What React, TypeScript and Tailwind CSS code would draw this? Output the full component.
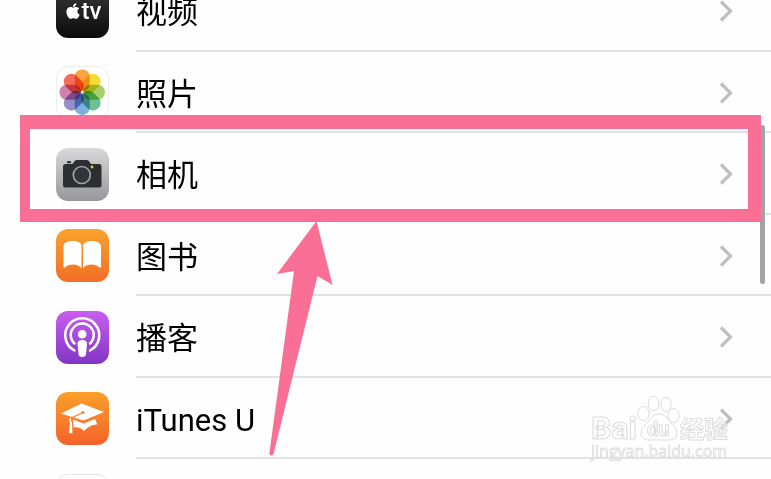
import type { ReactNode } from "react"
import { FaApple } from "react-icons/fa"

const petals = ["#f79a2e", "#f5d721", "#9ccb57", "#5db98a", "#6da7dd", "#8b83c3", "#c873a4", "#f25c4a"]

function TvIcon() {
  return (
    <div className="flex size-[53px] items-center justify-center rounded-xl bg-linear-to-b from-[#3a3a3a] to-[#0c0c0c] text-white">
      <FaApple className="size-[18px]" aria-hidden="true" />
      <span className="text-2xl leading-6 font-medium">tv</span>
    </div>
  )
}

function PhotosIcon() {
  return (
    <svg viewBox="0 0 53 53" className="size-[53px]" aria-hidden="true">
      <rect x="0.5" y="0.5" width="52" height="52" rx="12" fill="#fff" stroke="#ededed" />
      <g className="isolate">
        {petals.map((color, i) => (
          <rect
            key={color}
            x="18.7"
            y="3.5"
            width="15"
            height="21.5"
            rx="7"
            fill={color}
            opacity="0.9"
            transform={`rotate(${i * 45} 26.2 26.2)`}
            className="mix-blend-multiply"
          />
        ))}
      </g>
    </svg>
  )
}

function CameraIcon() {
  return (
    <svg viewBox="0 0 53 53" className="size-[53px]" aria-hidden="true">
      <defs>
        <linearGradient id="camera-bg" x1="0" y1="0" x2="0" y2="1">
          <stop offset="0" stopColor="#d9d9dc" />
          <stop offset="1" stopColor="#97979b" />
        </linearGradient>
      </defs>
      <rect width="53" height="53" rx="12" fill="url(#camera-bg)" />
      <rect x="11" y="13" width="4" height="2.3" rx="0.8" fill="#2d2e31" />
      <path
        d="M9 16H15.5C18 16 18 12 20.5 12H31C33.5 12 33.5 16 36 16H43Q45.5 16 45.5 18.5V37Q45.5 39.5 43 39.5H9.5Q7 39.5 7 37V18.5Q7 16 9 16Z"
        fill="#2d2e31"
      />
      <circle cx="25.8" cy="27" r="8.5" fill="#333437" stroke="#a4a5a8" strokeWidth="1.6" />
      <circle cx="36" cy="19" r="1.4" fill="#d9d431" />
    </svg>
  )
}

function BooksIcon() {
  return (
    <svg viewBox="0 0 53 53" className="size-[53px]" aria-hidden="true">
      <defs>
        <linearGradient id="books-bg" x1="0" y1="0" x2="0" y2="1">
          <stop offset="0" stopColor="#f9a22f" />
          <stop offset="1" stopColor="#f26e26" />
        </linearGradient>
      </defs>
      <rect width="53" height="53" rx="12" fill="url(#books-bg)" />
      <path
        d="M7.5 17C7.5 10.5 25.5 10 25.5 17V39.5C23 34.5 12.5 34.5 9 38.5Q7.5 39.5 7.5 37.5ZM45 17C45 10.5 27 10 27 17V39.5C29.5 34.5 40 34.5 43.5 38.5Q45 39.5 45 37.5Z"
        fill="#fff"
      />
    </svg>
  )
}

function PodcastsIcon() {
  return (
    <svg viewBox="0 0 53 53" className="size-[53px]" aria-hidden="true">
      <defs>
        <linearGradient id="podcasts-bg" x1="0" y1="0" x2="0" y2="1">
          <stop offset="0" stopColor="#c95ef0" />
          <stop offset="1" stopColor="#8135c4" />
        </linearGradient>
      </defs>
      <rect width="53" height="53" rx="12" fill="url(#podcasts-bg)" />
      <g fill="none" stroke="#fff" strokeLinecap="round" strokeWidth="2.5">
        <path d="M18.5 39.5A17 17 0 1 1 34 39.5" />
        <path d="M18.5 32.5A11.5 11.5 0 1 1 34 32.5" />
      </g>
      <circle cx="26.2" cy="23.2" r="4.3" fill="#fff" />
      <path d="M21.5 32.5Q21.5 29 26.2 29T31 32.5L30 43Q29.7 46 26.2 46T22.5 43Z" fill="#fff" />
    </svg>
  )
}

function ItunesUIcon() {
  return (
    <svg viewBox="0 0 53 53" className="size-[53px]" aria-hidden="true">
      <defs>
        <linearGradient id="itunesu-bg" x1="0" y1="0" x2="0" y2="1">
          <stop offset="0" stopColor="#fba029" />
          <stop offset="1" stopColor="#f4622b" />
        </linearGradient>
      </defs>
      <rect width="53" height="53" rx="12" fill="url(#itunesu-bg)" />
      <path d="M5 21.5L25.5 11.5L48 20L27.5 28.5Z" fill="#fff" />
      <path d="M17 27.5L27.5 31.5L39 27L41.5 32.5C37 32 31.5 35 28 39C25.5 35.5 21 34.5 17.5 35.5Z" fill="#fff" />
      <path d="M27 20.5L15.5 26V32" fill="none" stroke="#f58a2a" strokeWidth="1.3" />
      <circle cx="27" cy="20.5" r="1.6" fill="#f58a2a" />
      <path d="M14.5 26L16 31.5L16.5 41.5L13 41L14 31.5L13 27Z" fill="#fff" />
    </svg>
  )
}

function BlankIcon() {
  return <div className="size-[53px] rounded-xl border border-[#e6e6e2] bg-white" />
}

function Chevron() {
  return (
    <svg viewBox="0 0 14 24" className="h-6 w-[14px] shrink-0" aria-hidden="true">
      <path d="M2 2.5L11.5 12L2 21.5" fill="none" stroke="#bfbfbf" strokeWidth="3.2" />
    </svg>
  )
}

function Highlight() {
  return (
    <>
      <div className="pointer-events-none absolute -top-[18px] right-[10px] -bottom-[7px] left-5 z-10 border-t-[14px] border-r-[13px] border-b-[13px] border-l-[10px] border-[#f96f96]" />
      <svg
        viewBox="0 0 64 236"
        className="pointer-events-none absolute top-[88px] left-[269px] z-10 h-[236px] w-16"
        aria-hidden="true"
      >
        <path d="M47.5 0L63.5 64L48.5 55L4.5 233Q2 236 0.3 233L25 50L8 53Z" fill="#f96f96" />
      </svg>
    </>
  )
}

function Watermark() {
  return (
    <svg
      viewBox="0 0 144 72"
      className="pointer-events-none absolute right-[37px] bottom-[13px] h-[72px] w-36"
      aria-hidden="true"
    >
      <g fill="#fff" fillOpacity="0.6" stroke="#dcdcdc" strokeWidth="1">
        <ellipse cx="53.5" cy="19.5" rx="5.5" ry="7" />
        <ellipse cx="63.5" cy="9.5" rx="5.2" ry="7.3" />
        <ellipse cx="76" cy="10.5" rx="5.2" ry="7" />
        <ellipse cx="83.5" cy="21.5" rx="5.5" ry="7" />
        <path d="M69 20C62 20 60 26 55 31C48 38 51 46 59 46H79C88 46 89 37 83 31C78 26 76 20 69 20Z" />
        <g className="font-['Roboto','Noto_Sans_CJK_SC',sans-serif] font-bold">
          <text x="1" y="45" fontSize="32">Bai</text>
          <text x="57" y="42" fontSize="20">du</text>
          <text x="90" y="44" fontSize="24">经验</text>
        </g>
        <text x="1" y="63" fontSize="16" strokeWidth="0.8" className="font-['Open_Sans',sans-serif]">
          jingyan.baidu.com
        </text>
      </g>
    </svg>
  )
}

type Row = { label: string; icon: ReactNode; highlighted?: boolean }

const rows: Row[] = [
  { label: "视频", icon: <TvIcon /> },
  { label: "照片", icon: <PhotosIcon /> },
  { label: "相机", icon: <CameraIcon />, highlighted: true },
  { label: "图书", icon: <BooksIcon /> },
  { label: "播客", icon: <PodcastsIcon /> },
  { label: "iTunes U", icon: <ItunesUIcon /> },
  { label: "", icon: <BlankIcon /> },
]

export default function App() {
  return (
    <main className="relative h-screen overflow-hidden bg-[#fefefe] font-['Roboto','Noto_Sans_CJK_SC',sans-serif] text-black">
      <ul className="-mt-[30px]">
        {rows.map((row, i) => (
          <li key={i} className="relative h-[82px] even:h-[81px]">
            <a href="#" aria-label={row.label || "App"} className="flex h-full items-center gap-[27px] pl-14">
              {row.icon}
              <div className="flex h-full flex-1 items-center justify-between border-b-2 border-[#e2e2e2] pt-0.5 pr-[38px]">
                <span className="pt-1 text-[31px] leading-10">{row.label}</span>
                <Chevron />
              </div>
            </a>
            {row.highlighted && <Highlight />}
          </li>
        ))}
      </ul>
      <div className="absolute top-[125px] right-[6px] h-[159px] w-[5px] rounded-full bg-[#a3a3a3]" />
      <Watermark />
    </main>
  )
}
